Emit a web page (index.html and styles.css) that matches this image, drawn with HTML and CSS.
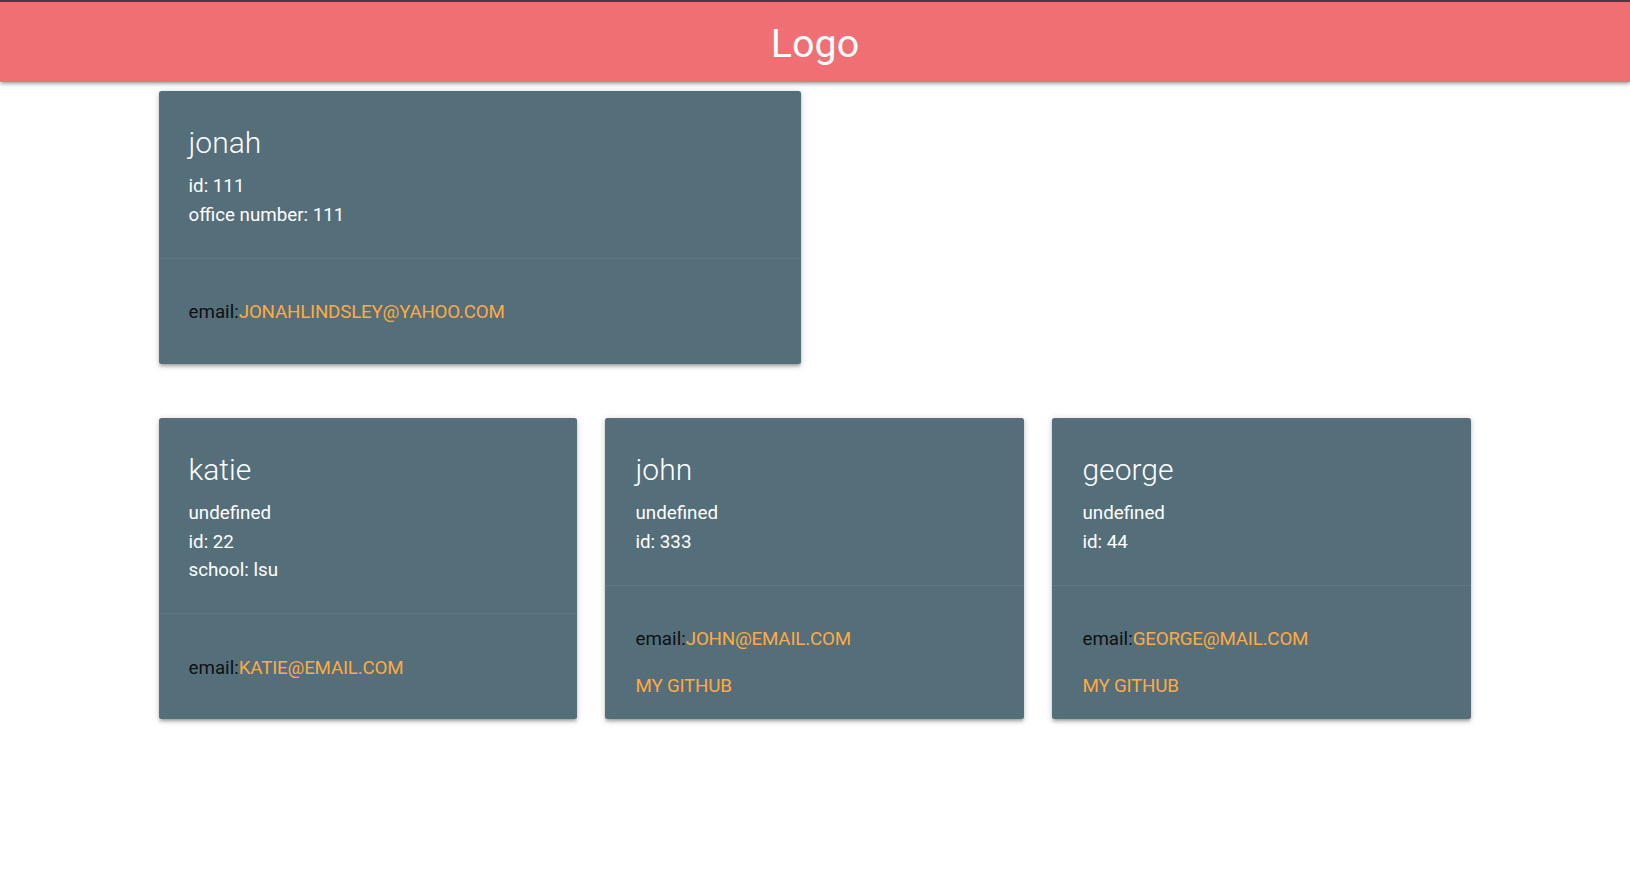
FILE: index.html
```html
<!DOCTYPE html>
<html lang="en">
<head>
<meta charset="utf-8">
<title>Team</title>
<link rel="stylesheet" href="styles.css">
</head>
<body>
<header class="nav">
  <div class="nav-wrapper">
    <a class="brand-logo" href="#">Logo</a>
  </div>
</header>
<main class="container">
  <div class="row">
    <div class="col half">
      <div class="card">
        <div class="card-content">
          <span class="card-title">jonah</span>
          <p>id: 111</p>
          <p>office number: 111</p>
        </div>
        <div class="card-action">
          <p>email:<a href="#">jonahlindsley@yahoo.com</a></p>
        </div>
      </div>
    </div>
  </div>
  <div class="row">
    <div class="col third">
      <div class="card">
        <div class="card-content">
          <span class="card-title">katie</span>
          <p>undefined</p>
          <p>id: 22</p>
          <p>school: lsu</p>
        </div>
        <div class="card-action">
          <p>email:<a href="#">katie@email.com</a></p>
        </div>
      </div>
    </div>
    <div class="col third">
      <div class="card">
        <div class="card-content">
          <span class="card-title">john</span>
          <p>undefined</p>
          <p>id: 333</p>
        </div>
        <div class="card-action">
          <p>email:<a href="#">john@email.com</a></p>
          <a href="#">my github</a>
        </div>
      </div>
    </div>
    <div class="col third">
      <div class="card">
        <div class="card-content">
          <span class="card-title">george</span>
          <p>undefined</p>
          <p>id: 44</p>
        </div>
        <div class="card-action">
          <p>email:<a href="#">george@mail.com</a></p>
          <a href="#">my github</a>
        </div>
      </div>
    </div>
  </div>
</main>
</body>
</html>
```

FILE: styles.css
```css
* {
  box-sizing: border-box;
}

html {
  font-size: 18.75px;
}

body {
  margin: 0;
  font-family: Roboto, "Open Sans", "Liberation Sans", sans-serif;
  font-size: 18.75px;
  line-height: 1.5;
  color: rgba(0, 0, 0, 0.87);
  background: #fff;
}

a {
  text-decoration: none;
}

.nav {
  border-top: 2px solid #3f3f3f;
  background-color: #ef6f73;
  height: 82px;
  color: #fff;
  box-shadow: 0 2.5px 2.5px 0 rgba(0, 0, 0, 0.14), 0 3.75px 1.25px -2.5px rgba(0, 0, 0, 0.12), 0 1.25px 6.25px 0 rgba(0, 0, 0, 0.2);
  position: relative;
  z-index: 1;
}

.nav-wrapper {
  display: flex;
  justify-content: center;
  align-items: flex-start;
  height: 80px;
  padding-top: 3px;
}

.brand-logo {
  color: #fff;
  font-size: 39.4px;
  font-weight: 400;
  line-height: 77px;
}

.container {
  width: 1313px;
  margin: 0 auto;
}

.row {
  display: flex;
  align-items: flex-start;
  margin: 0 -14px 26px;
}

.col {
  padding: 0 14px;
}

.half {
  width: 50%;
}

.third {
  width: 33.3333%;
}

.card {
  background-color: #546e7a;
  border-radius: 2.5px;
  margin: 9.375px 0 18.75px;
  box-shadow: 0 2.5px 2.5px 0 rgba(0, 0, 0, 0.14), 0 3.75px 1.25px -2.5px rgba(0, 0, 0, 0.12), 0 1.25px 6.25px 0 rgba(0, 0, 0, 0.2);
}

.card-content {
  padding: 32px 30px 29px;
  color: #fff;
}

.card-title {
  display: block;
  font-size: 30px;
  font-weight: 300;
  line-height: 40px;
  margin-bottom: 9px;
}

.card-content p {
  margin: 0;
}

.card-action {
  border-top: 1px solid rgba(160, 160, 160, 0.2);
  padding: 21px 30px 19px;
}

.card-action p {
  margin: 18.75px 0;
}

.card-action a {
  color: #ffab40;
  text-transform: uppercase;
  letter-spacing: -0.2px;
  margin-right: 30px;
}

.card-action p a {
  margin-right: 0;
}
```
